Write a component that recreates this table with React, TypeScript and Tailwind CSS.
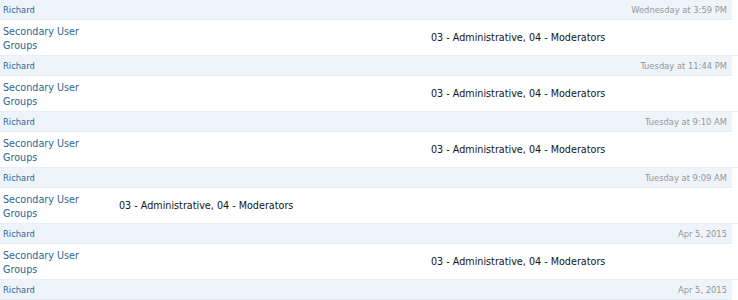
const entries = [
  { date: "Wednesday at 3:59 PM", wide: true },
  { date: "Tuesday at 11:44 PM", wide: true },
  { date: "Tuesday at 9:10 AM", wide: true },
  { date: "Tuesday at 9:09 AM", wide: false },
  { date: "Apr 5, 2015", wide: true },
];

function Header({ date }: { date?: string }) {
  return (
    <div className="mr-[6px] flex h-[20px] items-center justify-between border-b border-[#e3ebf4] bg-[#eef4fa] px-[3px] text-[9.3px]">
      <span className="text-[#2d6592]">Richard</span>
      {date && <span className="pr-[2px] text-[#969696]">{date}</span>}
    </div>
  );
}

export default function App() {
  return (
    <div
      className="h-[300px] w-[738px] overflow-hidden bg-white"
      style={{ fontFamily: '"DejaVu Sans Condensed", "DejaVu Sans", sans-serif' }}
    >
      {entries.map((e, i) => (
        <div key={i}>
          <Header date={e.date} />
          <div className="flex h-[36px] items-center border-b border-[#e8eef5] bg-white px-[3px] pt-[2px]">
            <div className="w-[116px] shrink-0 text-[10.7px] leading-[14px] text-[#2d6592]">
              Secondary User
              <br />
              Groups
            </div>
            <div
              className={
                e.wide
                  ? "pl-[312px] text-[10.7px] text-[#141414]"
                  : "text-[10.7px] text-[#141414]"
              }
            >
              03 - Administrative, 04 - Moderators
            </div>
          </div>
        </div>
      ))}
      <Header date="Apr 5, 2015" />
    </div>
  );
}
